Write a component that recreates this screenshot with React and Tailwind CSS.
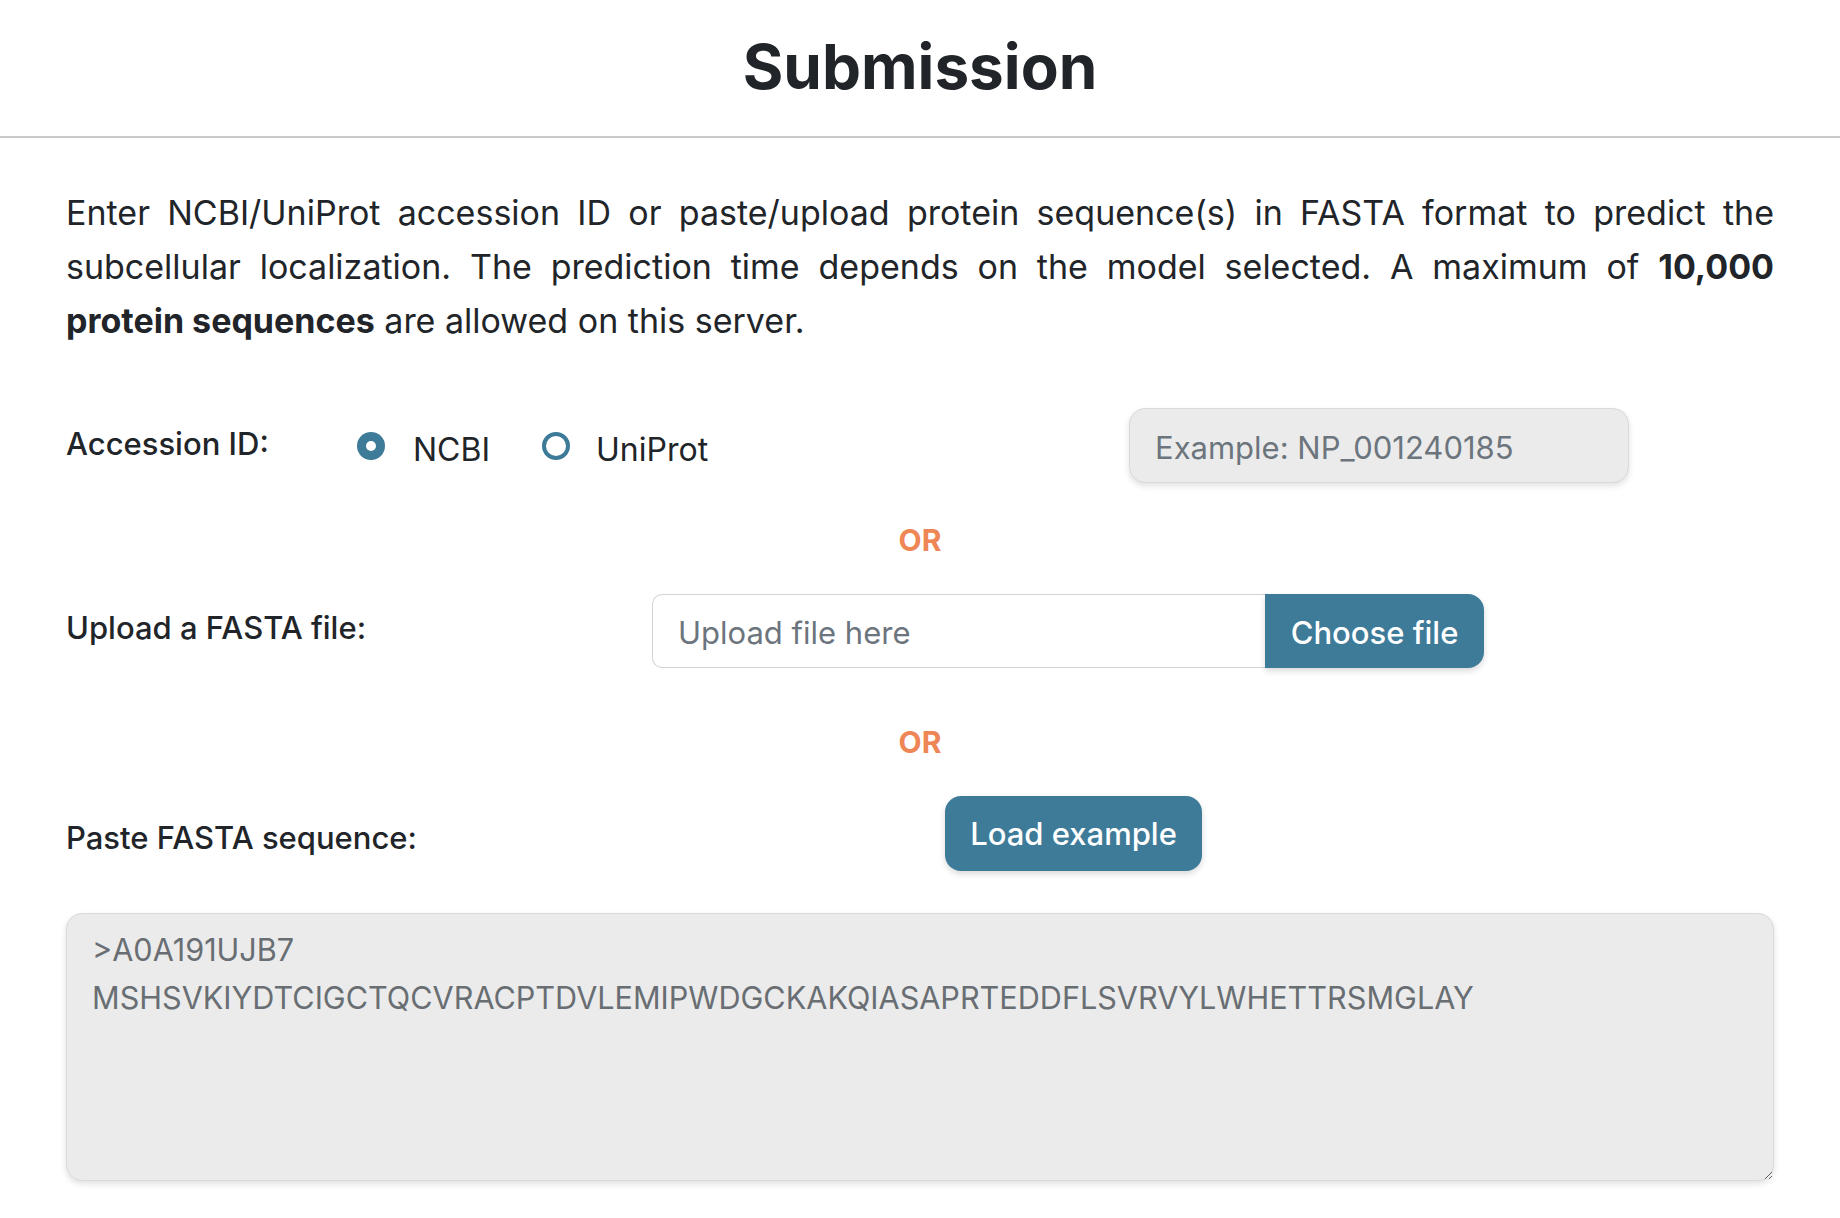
import React from 'react';

const Radio = ({ checked, label }) => (
  <label className="flex items-center">
    {checked ? (
      <span className="flex h-[28px] w-[28px] items-center justify-center rounded-full bg-[#3e7b99]">
        <span className="h-[10px] w-[10px] rounded-full bg-white" />
      </span>
    ) : (
      <span className="h-[28px] w-[28px] rounded-full border-[4px] border-[#3e7b99] bg-white" />
    )}
    <span className="mt-[9px] text-[32px] leading-[40px]">{label}</span>
  </label>
);

const OrDivider = ({ className }) => (
  <div className={`text-center text-[30px] font-bold leading-[40px] text-[#ef8656] ${className}`}>OR</div>
);

export default function App() {
  return (
    <div className="min-h-screen bg-white font-['Inter','Liberation_Sans',sans-serif] text-[#212529]">
      <header className="border-b-2 border-[#cacaca] pt-[30px] pb-[32px] text-center">
        <h1 className="text-[62px] font-bold leading-[74px]">Submission</h1>
      </header>

      <main className="px-[66px] pb-[40px]">
        {/* intro text, lines kept as in the original wrap */}
        <p className="mt-[48px] text-[34px] leading-[54px]">
          <span className="block text-justify [text-align-last:justify]">
            Enter NCBI/UniProt accession ID or paste/upload protein sequence(s) in FASTA format to predict the
          </span>
          <span className="block text-justify [text-align-last:justify]">
            subcellular localization. The prediction time depends on the model selected. A maximum of{' '}
            <b className="font-bold">10,000</b>
          </span>
          <span className="block">
            <b className="font-bold">protein sequences</b> are allowed on this server.
          </span>
        </p>

        <div className="mt-[60px] flex h-[75px] items-center">
          <div className="mb-[4px] w-[291px] text-[31px] font-medium leading-[40px]">Accession ID:</div>
          <div className="flex w-[772px] items-center">
            <Radio checked label={<span className="ml-[28px]">NCBI</span>} />
            <div className="ml-[52px]">
              <Radio label={<span className="ml-[26px]">UniProt</span>} />
            </div>
          </div>
          <input
            type="text"
            placeholder="Example: NP_001240185"
            className="h-[75px] w-[500px] rounded-[16px] border border-[#d9d9d9] bg-[#ebebeb] px-[25px] pt-[4px] text-[31px] shadow-[0_3px_6px_rgba(0,0,0,0.12)] outline-none placeholder:text-[#6c757d]"
          />
        </div>

        <OrDivider className="mt-[37px]" />

        <div className="mt-[34px] flex h-[74px] items-center">
          <div className="mb-[7px] w-[586px] text-[31px] font-medium leading-[40px]">Upload a FASTA file:</div>
          <div className="flex h-[74px] w-[832px]">
            <div className="flex flex-1 items-center rounded-l-[10px] border border-r-0 border-[#ced4da] bg-white px-[25px] pt-[4px] text-[31px] text-[#6c757d]">
              Upload file here
            </div>
            <button className="w-[219px] rounded-r-[16px] bg-[#3e7b99] pt-[4px] text-[31px] font-medium text-white shadow-[0_3px_6px_rgba(0,0,0,0.15)]">
              Choose file
            </button>
          </div>
        </div>

        <OrDivider className="mt-[54px]" />

        <div className="mt-[34px] flex h-[75px] items-center">
          <div className="mt-[8px] w-[879px] text-[31px] font-medium leading-[40px]">Paste FASTA sequence:</div>
          <button className="h-[75px] w-[257px] rounded-[16px] bg-[#3e7b99] pt-[2px] text-[31px] font-medium text-white shadow-[0_3px_6px_rgba(0,0,0,0.15)]">
            Load example
          </button>
        </div>

        <textarea
          className="mt-[42px] block h-[268px] w-full rounded-[16px] border border-[#dadada] bg-[#ebebeb] px-[25px] pt-[12px] text-[30.6px] leading-[48px] text-[#696e73] shadow-[0_3px_6px_rgba(0,0,0,0.12)] outline-none"
          defaultValue={'>A0A191UJB7\nMSHSVKIYDTCIGCTQCVRACPTDVLEMIPWDGCKAKQIASAPRTEDDFLSVRVYLWHETTRSMGLAY'}
        />
      </main>
    </div>
  );
}
